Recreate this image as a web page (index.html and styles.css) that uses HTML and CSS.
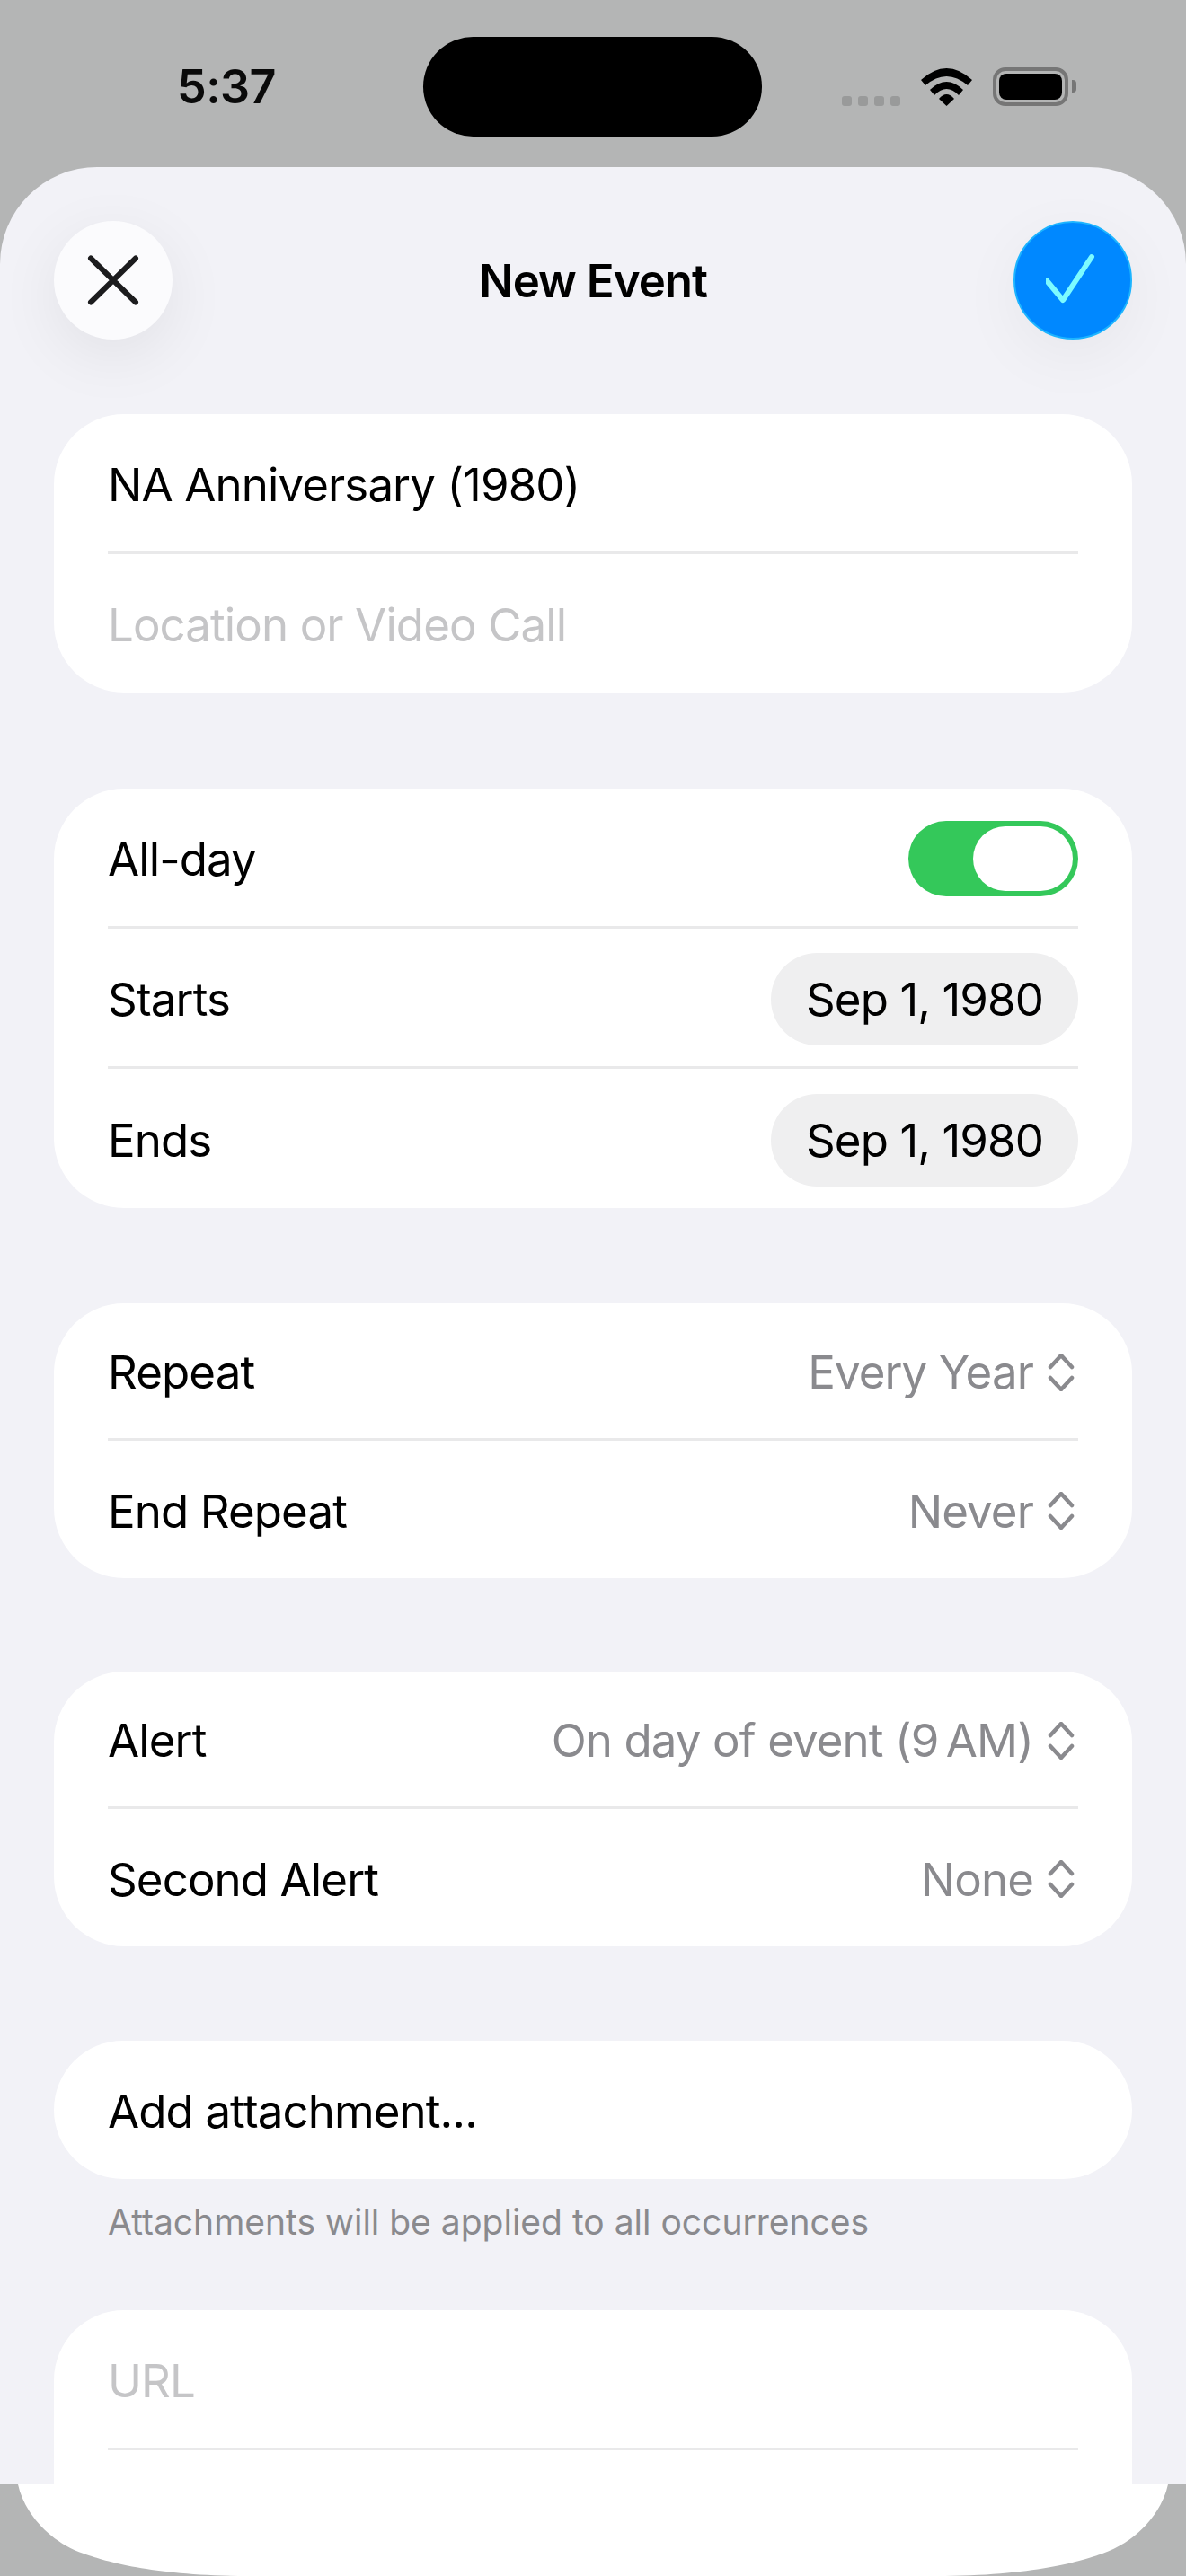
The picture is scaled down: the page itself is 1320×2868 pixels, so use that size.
FILE: index.html
```html
<!DOCTYPE html>
<html lang="en">
<head>
<meta charset="utf-8">
<title>New Event</title>
<link rel="stylesheet" href="styles.css">
</head>
<body>
<div class="screen">
  <header class="status">
    <span class="time">5:37</span>
    <div class="island"></div>
    <div class="status-icons">
      <div class="dots"><i></i><i></i><i></i><i></i></div>
      <svg class="wifi" width="57" height="42" viewBox="0 0 57 42"><path d="M0 13Q28.500-13 57 13L52 19Q28.500-1 5 19Z"/><path d="M10 24Q28.500 6 47 24L42 30Q28.500 16 15 30Z"/><path d="M20 34Q28.500 24 37 34L28.500 42Z"/></svg>
      <div class="battery"><div class="battery-fill"></div></div>
      <div class="battery-tip"></div>
    </div>
  </header>
  <main class="sheet">
    <nav class="nav">
      <button class="round close"><svg width="60" height="60" viewBox="0 0 60 60"><path d="M5 5.500 55 54.500M55 5.500 5 54.500" transform="translate(0 0)"/></svg></button>
      <h1 class="title">New Event</h1>
      <button class="round done"><svg width="60" height="60" viewBox="0 0 60 60"><path d="M9 27 27 49 59 0" transform="translate(-8 4) scale(1 .98)"/></svg></button>
    </nav>

    <section class="card first">
      <div class="row r153">NA Anniversary (1980)</div>
      <div class="sep"></div>
      <div class="row r154 placeholder">Location or Video Call</div>
    </section>

    <section class="card gap107">
      <div class="row r153"><span>All-day</span><div class="toggle"><div class="thumb"></div></div></div>
      <div class="sep"></div>
      <div class="row r153"><span>Starts</span><span class="pill">Sep 1, 1980</span></div>
      <div class="sep"></div>
      <div class="row r155"><span>Ends</span><span class="pill">Sep 1, 1980</span></div>
    </section>

    <section class="card gap106">
      <div class="row r150"><span>Repeat</span><span class="value">Every Year<svg class="updown" width="30" height="42" viewBox="0 0 30 42"><path d="M3 15 15 2 27 15M3 27 15 40 27 27"/></svg></span></div>
      <div class="sep"></div>
      <div class="row r153"><span>End Repeat</span><span class="value">Never<svg class="updown" width="30" height="42" viewBox="0 0 30 42"><path d="M3 15 15 2 27 15M3 27 15 40 27 27"/></svg></span></div>
    </section>

    <section class="card gap104">
      <div class="row r150"><span>Alert</span><span class="value">On day of event (9&#8201;AM)<svg class="updown" width="30" height="42" viewBox="0 0 30 42"><path d="M3 15 15 2 27 15M3 27 15 40 27 27"/></svg></span></div>
      <div class="sep"></div>
      <div class="row r153"><span>Second Alert</span><span class="value">None<svg class="updown" width="30" height="42" viewBox="0 0 30 42"><path d="M3 15 15 2 27 15M3 27 15 40 27 27"/></svg></span></div>
    </section>

    <section class="card gap105">
      <div class="row r154">Add attachment...</div>
    </section>
    <p class="foot">Attachments will be applied to all occurrences</p>

    <section class="card last">
      <div class="row r153 placeholder">URL</div>
      <div class="sep"></div>
      <div class="row r153"></div>
    </section>
  </main>
  <svg class="cap" width="1320" height="102" viewBox="0 0 1320 102"><path d="M20 0C27 32 55 64 93 77 115 85 170 102 278 102H1042C1150 102 1205 85 1227 77 1265 64 1293 32 1300 0Z"/></svg>
</div>
</body>
</html>
```
FILE: styles.css
```css
* { box-sizing: border-box; }
html, body { margin: 0; padding: 0; }
body { width: 1320px; height: 2868px; overflow: hidden; font-family: Inter, "Liberation Sans", sans-serif; }
.screen { width: 1320px; height: 2868px; background: #b4b5b5; display: flex; flex-direction: column; }

.status { height: 186px; flex: none; display: grid; grid-template-columns: 471px 377px 1fr; padding-top: 41px; }
.time { font-size: 52px; font-weight: 600; line-height: 111px; text-align: center; padding-left: 33px; color: #0a0a0a; letter-spacing: -0.6px; padding-right: 0; }
.island { width: 377px; height: 111px; background: #000; border-radius: 56px; }
.status-icons { display: flex; align-items: flex-end; height: 77px; padding-left: 89px; }
.dots { display: flex; gap: 7px; }
.dots i { width: 11px; height: 11px; border-radius: 3px; background: #999a9a; display: block; }
.wifi { margin-left: 23px; fill: #000; }
.battery { width: 84px; height: 43px; margin-left: 23px; border: 4px solid #767676; border-radius: 14px; padding: 3px; }
.battery-fill { width: 100%; height: 100%; background: #000; border-radius: 8px; }
.battery-tip { width: 5px; height: 14px; margin: 0 0 15px 4px; background: #767676; border-radius: 0 4px 4px 0; }

.sheet { height: 2580px; flex: none; background: #f2f2f7; padding: 60px 60px 0; overflow: hidden; border-radius: 108px 108px 0 0; color: #000; font-size: 51px; letter-spacing: -0.9px; }
.nav { height: 132px; display: flex; align-items: center; justify-content: space-between; }
.title { margin: 0; font-size: 51px; font-weight: 600; letter-spacing: -1px; }
.round { width: 132px; height: 132px; padding: 0; border: 0; border-radius: 50%; display: flex; align-items: center; justify-content: center; }
.round svg { fill: none; stroke-width: 6px; stroke-linecap: round; stroke-linejoin: round; }
.close { background: #fbfbfd; box-shadow: 0 18px 70px rgba(0,0,0,.07); }
.close svg { stroke: #1c1c1e; }
.done { background: #0088ff; border: 2px solid #1cb4ff; box-shadow: 0 18px 70px rgba(0,0,0,.05); }
.done svg { stroke: #7cfbff; }

.card { background: #fff; border-radius: 78px; padding: 0 60px; }
.first { margin-top: 83px; }
.gap107 { margin-top: 107px; }
.gap106 { margin-top: 106px; }
.gap105 { margin-top: 105px; }
.gap104 { margin-top: 104px; }
.last { margin-top: 0; }
.row { display: flex; align-items: center; justify-content: space-between; padding-top: 3px; }
.r150 { height: 150px; }
.r153 { height: 153px; }
.r154 { height: 154px; }
.r155 { height: 155px; }
.sep { height: 3px; background: #e9e9ea; }
.placeholder { color: #c5c5c7; }
.toggle { width: 189px; height: 84px; background: #34c85a; border-radius: 42px; padding: 6px; display: flex; justify-content: flex-end; }
.thumb { width: 111px; height: 72px; background: #fff; border-radius: 36px; }
.pill { height: 103px; padding: 0 39px; background: #efeff0; border-radius: 52px; display: flex; align-items: center; }
.value { color: #8a8a8e; display: flex; align-items: center; }
.updown { margin-left: 16px; margin-right: 4px; fill: none; stroke: #8a8a8e; stroke-width: 4.500px; stroke-linecap: round; stroke-linejoin: round; }
.foot { margin: 0; height: 146px; padding: 25px 0 0 60px; font-size: 39px; line-height: 46px; color: #8a8a8e; letter-spacing: 0; }
.cap { flex: none; display: block; fill: #fff; }
```
